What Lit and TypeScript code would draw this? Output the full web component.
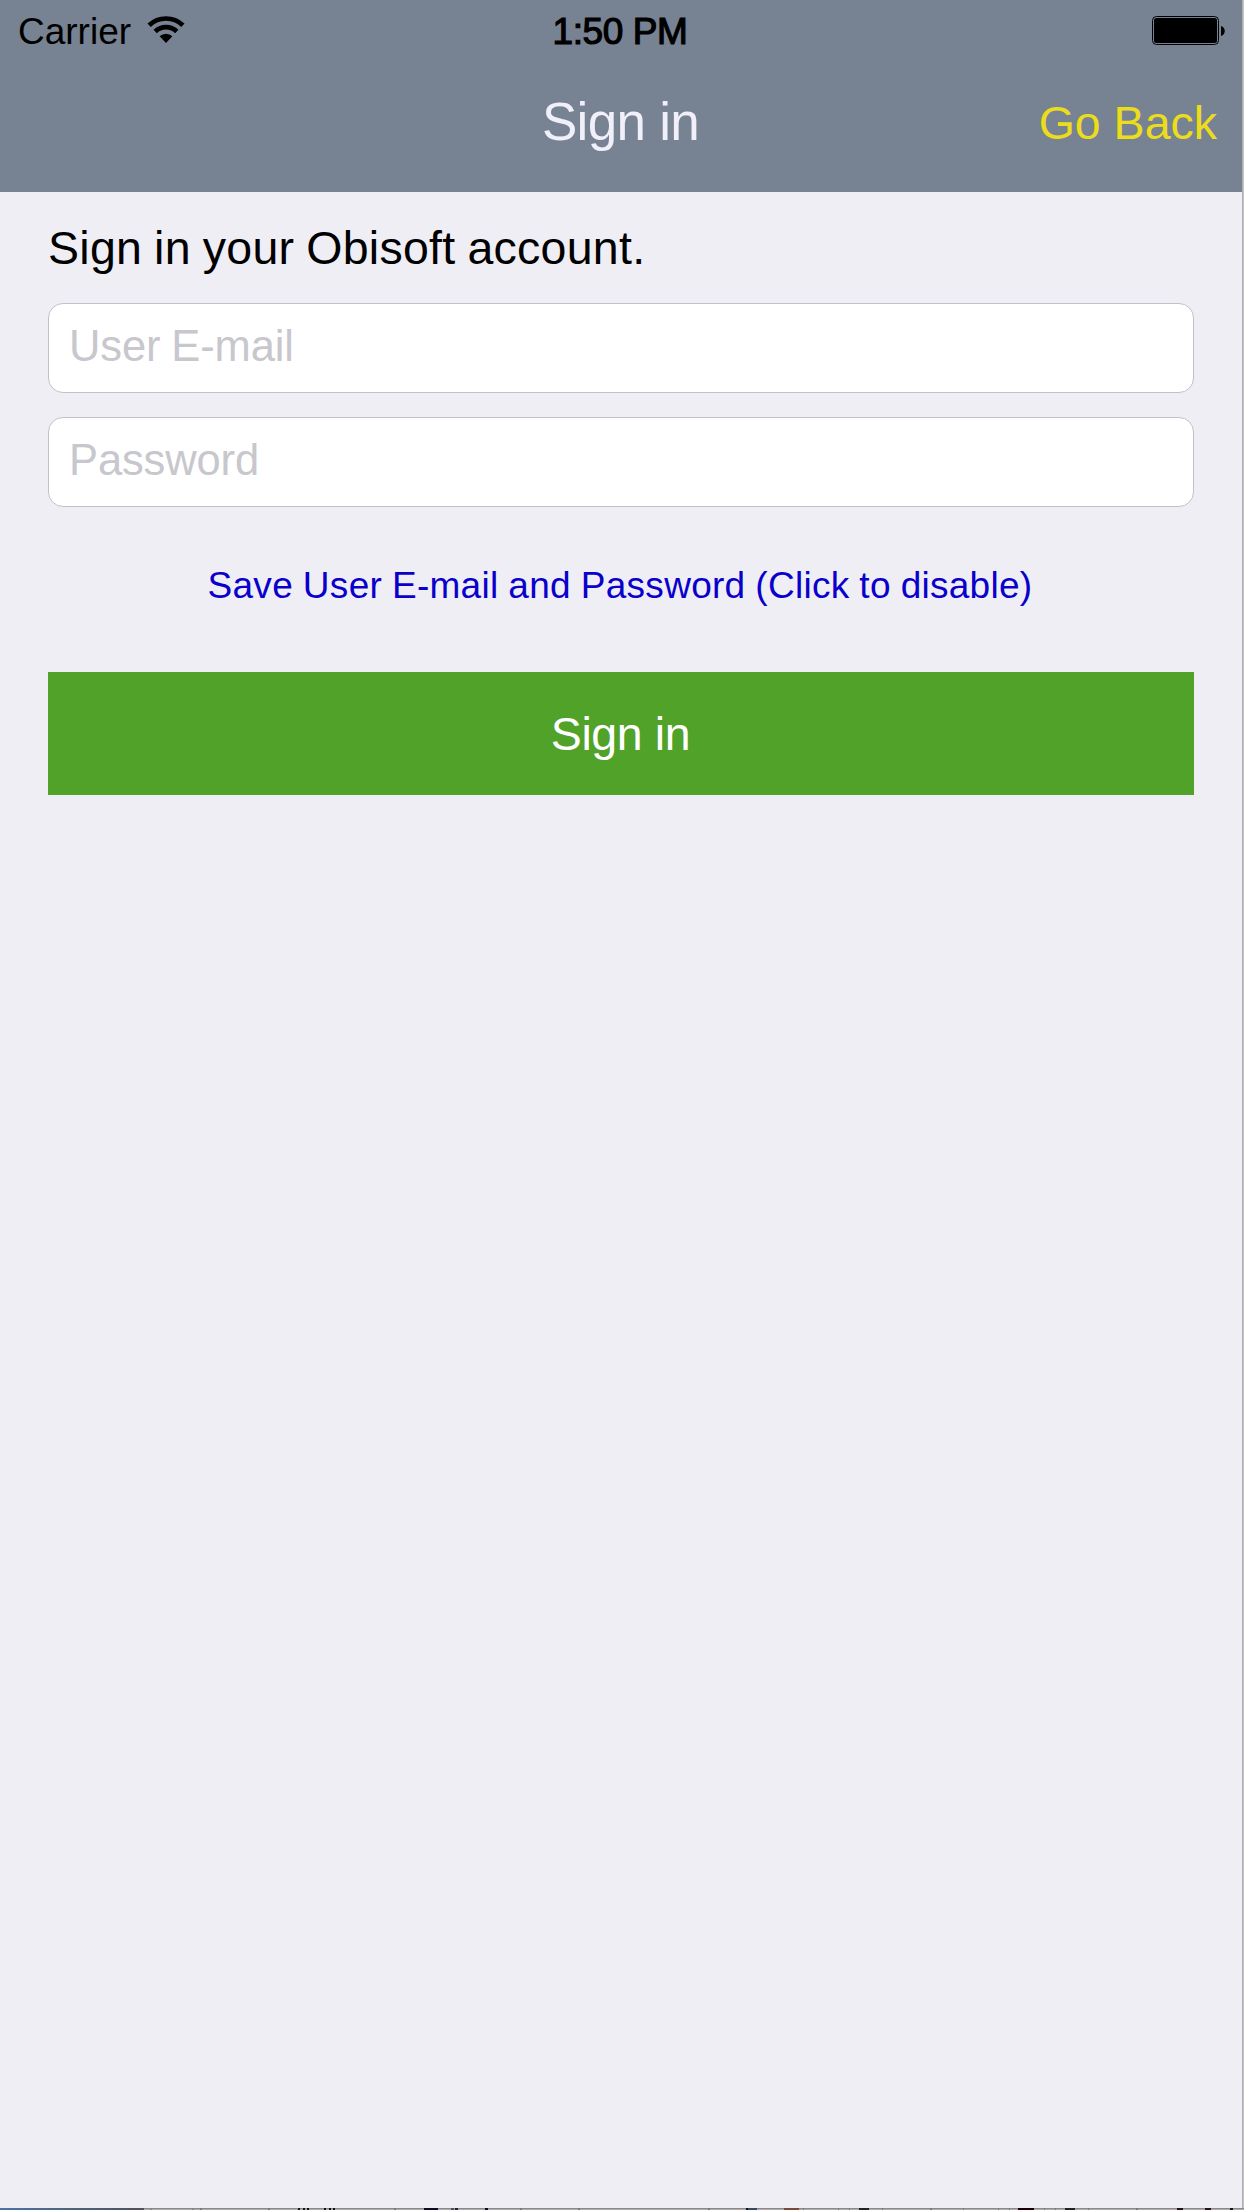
import { LitElement, html, css, svg } from "lit";
import { customElement, state } from "lit/decorators.js";

@customElement("status-bar")
class StatusBar extends LitElement {
  static styles = css`
    :host {
      display: grid;
      grid-template-columns: 1fr auto 1fr;
      align-items: start;
      height: 60px;
      padding: 0 17px 0 18px;
      box-sizing: border-box;
      color: #000;
      font-size: 37px;
      line-height: 42px;
    }
    .left {
      display: flex;
      padding-top: 11px;
    }
    .wifi {
      display: block;
      margin: 4px 0 0 16px;
    }
    .time {
      padding: 11px 3px 0 0;
      letter-spacing: -0.4px;
      -webkit-text-stroke: 1.2px #000;
    }
    .battery {
      display: block;
      justify-self: end;
      margin-top: 16px;
    }
  `;

  render() {
    return html`
      <div class="left">
        <span>Carrier</span>
        <svg class="wifi" width="38" height="29" viewBox="0 0 38 29">
          <g fill="none" stroke="#000" stroke-width="4.7">
            <path d="M2.1 10.3A24.4 24.4 0 0 1 35.9 10.3" />
            <path d="M8.2 16.5A15.7 15.7 0 0 1 29.8 16.5" />
          </g>
          <path d="M19 28L12.6 21.2A9.4 9.4 0 0 1 25.4 21.2Z" />
        </svg>
      </div>
      <span class="time">1:50 PM</span>
      <svg class="battery" width="73" height="29" viewBox="0 0 73 29">
        <rect x="0.5" y="0.5" width="66" height="28" rx="4" fill="none" stroke="#000" />
        <rect x="2" y="2" width="63" height="25" rx="2.5" />
        <path d="M69 10C74 11.500 74 18.500 69 20Z" />
      </svg>
    `;
  }
}

/* [x, width, colour] of each mark on the sliver of window under the screen */
const EDGE_MARKS: [number, number, string][] = [
  [150, 2, "#8a8788"], [192, 2, "#8a8788"], [200, 2, "#7c797a"], [268, 2, "#7c797a"],
  [298, 2, "#111"], [303, 2, "#111"], [307, 2, "#111"],
  [324, 2, "#111"], [329, 2, "#111"], [333, 2, "#111"], [394, 2, "#7c797a"],
  [424, 14, "#0a0a22"], [451, 3, "#40546a"], [455, 3, "#20242e"], [485, 3, "#0a0a30"],
  [520, 2, "#7c797a"], [578, 2, "#7c797a"], [708, 2, "#7c797a"],
  [746, 2, "#111"], [748, 9, "#3a4a5e"], [784, 15, "#7a4a38"], [803, 1, "#7c797a"],
  [838, 1, "#7c797a"], [849, 1, "#7c797a"], [859, 10, "#1c242a"], [882, 1, "#7c797a"],
  [930, 2, "#7c797a"], [963, 1, "#7c797a"], [998, 1, "#7c797a"], [1009, 1, "#7c797a"],
  [1018, 16, "#1a0000"], [1044, 1, "#7c797a"], [1055, 1, "#7c797a"],
  [1065, 10, "#1c242a"], [1088, 1, "#7c797a"], [1136, 2, "#7c797a"],
  [1177, 6, "#24140e"], [1205, 6, "#24140e"], [1230, 3, "#24140e"],
];

@customElement("app-root")
class AppRoot extends LitElement {
  static styles = css`
    :host {
      display: grid;
      grid-template-columns: 1242px 2px;
      grid-template-rows: 2208px 2px;
      width: 1244px;
      height: 2210px;
      overflow: hidden;
      background: #efeef5;
      font-family: "Liberation Sans", Arial, sans-serif;
    }
    .screen {
      display: flex;
      flex-direction: column;
    }
    .header {
      height: 192px;
      background: #778292;
    }
    .nav {
      display: grid;
      grid-template-columns: 1fr auto 1fr;
      align-items: start;
      padding: 32px 25px 0;
    }
    .title {
      grid-column: 2;
      margin: 0 1px 0 0;
      font-size: 53px;
      line-height: 60px;
      font-weight: 400;
      letter-spacing: -0.7px;
      color: #f0effa;
    }
    .back {
      justify-self: end;
      margin: 5px 0 0;
      padding: 0;
      border: 0;
      background: none;
      font: 46.5px/52px "Liberation Sans", Arial, sans-serif;
      color: #ebdd1c;
    }
    .form {
      display: flex;
      flex-direction: column;
      padding: 30px 48px 0;
    }
    .label {
      font-size: 46.5px;
      line-height: 52px;
      letter-spacing: 0.28px;
      word-spacing: -1.3px;
      color: #000;
      margin-bottom: 29px;
    }
    .field {
      height: 90px;
      box-sizing: border-box;
      margin: 0 0 24px;
      padding: 0 20px 3px;
      border: 1px solid #c2c1c9;
      border-radius: 15px;
      background: #fff;
      font: 43.5px/50px "Liberation Sans", Arial, sans-serif;
      letter-spacing: -0.12px;
      word-spacing: -1px;
      outline: none;
    }
    .field::placeholder {
      color: #c7c7cd;
      opacity: 1;
    }
    .save {
      margin: 33px 0 65px;
      padding: 0 2px 0 0;
      border: 0;
      background: none;
      font: 37px/43px "Liberation Sans", Arial, sans-serif;
      letter-spacing: 0.28px;
      word-spacing: -0.7px;
      color: #0a00cc;
    }
    .submit {
      height: 123px;
      padding: 0 1px 0 0;
      border: 0;
      background: #50a228;
      font: 46.5px/52px "Liberation Sans", Arial, sans-serif;
      letter-spacing: -0.4px;
      color: #fff;
    }
    .side {
      background: linear-gradient(90deg, #afafb4 50%, #c4c4c8 50%);
    }
    .edge {
      display: block;
      grid-column: 1 / 3;
    }
  `;

  @state() private saveLogin = true;

  render() {
    return html`
      <div class="screen">
        <header class="header">
          <status-bar></status-bar>
          <div class="nav">
            <h1 class="title">Sign in</h1>
            <button class="back">Go Back</button>
          </div>
        </header>
        <main class="form">
          <div class="label">Sign in your Obisoft account.</div>
          <input class="field" type="email" placeholder="User E-mail" />
          <input class="field" type="password" placeholder="Password" />
          <button class="save" @click=${() => (this.saveLogin = !this.saveLogin)}>
            Save User E-mail and Password (Click to ${this.saveLogin ? "disable" : "enable"})
          </button>
          <button class="submit">Sign in</button>
        </main>
      </div>
      <div class="side"></div>
      <svg class="edge" width="1244" height="2" viewBox="0 0 1244 2" shape-rendering="crispEdges">
        <defs>
          <linearGradient id="desk">
            <stop offset="0" stop-color="#4d74a0" />
            <stop offset="1" stop-color="#52505c" />
          </linearGradient>
        </defs>
        <rect width="1244" height="1" fill="#8c898a" />
        <rect y="1" width="1244" height="1" fill="#aeaaab" />
        <rect width="144" height="2" fill="url(#desk)" />
        ${EDGE_MARKS.map(([x, w, c]) => svg`<rect x=${x} y="0" width=${w} height="2" fill=${c} />`)}
      </svg>
    `;
  }
}
